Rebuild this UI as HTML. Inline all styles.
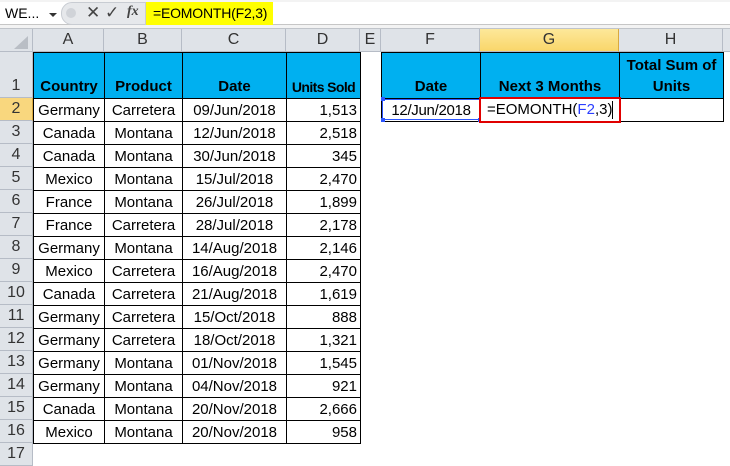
<!DOCTYPE html>
<html><head><style>
*{margin:0;padding:0;box-sizing:border-box}
body{width:730px;height:465px;overflow:hidden;background:#fff;font-family:"Liberation Sans",sans-serif;font-size:15px;color:#000;position:relative}
.a{position:absolute}
.hdr{position:absolute;background:#dfe3e8;border-right:1px solid #b6bcc6;border-bottom:1px solid #b6bcc6;color:#333;font-size:16px;text-align:center}
</style></head><body>
<!-- formula bar -->
<div class="a" style="left:0;top:0;width:730px;height:29px;background:#f3f3f3"></div>
<div class="a" style="left:0;top:2px;width:730px;height:23px;background:#fff;border-bottom:1px solid #c6c6c6"></div>
<div class="a" style="left:5px;top:5px;font-size:14px">WE...</div>
<div class="a" style="left:49px;top:13px;width:0;height:0;border-left:4px solid transparent;border-right:4px solid transparent;border-top:4px solid #333"></div>
<div class="a" style="left:61px;top:2px;width:85px;height:23px;background:#e6e8eb;border:1px solid #c8ccd2;border-radius:11px 0 0 11px"></div>
<div class="a" style="left:66px;top:8px;width:10px;height:10px;border-radius:5px;background:#d0d3d8"></div>
<div class="a" style="left:86px;top:3px;font-size:17px;color:#444">✕</div>
<div class="a" style="left:105px;top:3px;font-size:17px;color:#444">✓</div>
<div class="a" style="left:127px;top:4px;font-size:14px;font-style:italic;font-family:'Liberation Serif',serif;font-weight:bold;color:#444">fx</div>
<div class="a" style="left:146px;top:2px;width:127px;height:23px;background:#ffff00"></div>
<div class="a" style="left:153px;top:5px;font-size:14px;letter-spacing:-0.2px">=EOMONTH(F2,3)</div>
<div class="a" style="left:0;top:28px;width:730px;height:1px;background:#c0c4ca"></div>
<!-- column headers -->
<div class="hdr" style="left:0;top:29px;width:33px;height:23px"></div>
<div class="a" style="left:14px;top:36px;width:0;height:0;border-left:14px solid transparent;border-bottom:13px solid #b9bec5"></div>
<div class="hdr" style="left:33px;top:29px;width:71px;height:23px;line-height:22px">A</div>
<div class="hdr" style="left:104px;top:29px;width:78px;height:23px;line-height:22px">B</div>
<div class="hdr" style="left:182px;top:29px;width:104px;height:23px;line-height:22px">C</div>
<div class="hdr" style="left:286px;top:29px;width:74px;height:23px;line-height:22px">D</div>
<div class="hdr" style="left:360px;top:29px;width:21px;height:23px;line-height:22px">E</div>
<div class="hdr" style="left:381px;top:29px;width:99px;height:23px;line-height:22px">F</div>
<div class="hdr" style="left:480px;top:29px;width:139px;height:23px;line-height:22px;background:linear-gradient(#fde89a,#f9d66a);border-right-color:#d9a93f">G</div>
<div class="hdr" style="left:619px;top:29px;width:104px;height:23px;line-height:22px">H</div>
<div class="hdr" style="left:723px;top:29px;width:10px;height:23px"></div>
<!-- row headers -->
<div class="hdr" style="left:0;top:52px;width:33px;height:46px;line-height:68px">1</div>
<div class="hdr" style="left:0;top:98px;width:33px;height:23px;line-height:22px;background:#f9d77e;border-right-color:#d9a93f">2</div>
<div class="hdr" style="left:0;top:121px;width:33px;height:23px;line-height:22px">3</div>
<div class="hdr" style="left:0;top:144px;width:33px;height:23px;line-height:22px">4</div>
<div class="hdr" style="left:0;top:167px;width:33px;height:23px;line-height:22px">5</div>
<div class="hdr" style="left:0;top:190px;width:33px;height:23px;line-height:22px">6</div>
<div class="hdr" style="left:0;top:213px;width:33px;height:23px;line-height:22px">7</div>
<div class="hdr" style="left:0;top:236px;width:33px;height:23px;line-height:22px">8</div>
<div class="hdr" style="left:0;top:259px;width:33px;height:23px;line-height:22px">9</div>
<div class="hdr" style="left:0;top:282px;width:33px;height:23px;line-height:22px">10</div>
<div class="hdr" style="left:0;top:305px;width:33px;height:23px;line-height:22px">11</div>
<div class="hdr" style="left:0;top:328px;width:33px;height:23px;line-height:22px">12</div>
<div class="hdr" style="left:0;top:351px;width:33px;height:23px;line-height:22px">13</div>
<div class="hdr" style="left:0;top:374px;width:33px;height:23px;line-height:22px">14</div>
<div class="hdr" style="left:0;top:397px;width:33px;height:23px;line-height:22px">15</div>
<div class="hdr" style="left:0;top:420px;width:33px;height:23px;line-height:22px">16</div>
<div class="hdr" style="left:0;top:443px;width:33px;height:23px;line-height:22px">17</div>

<style>
.h td{border:1px solid #000;text-align:center;vertical-align:bottom;padding-bottom:1px;font-weight:bold;font-size:15px;overflow:hidden;white-space:nowrap;line-height:20px}
.t td{border:1px solid #000;height:23px;white-space:nowrap;overflow:hidden;padding:0 3px;line-height:21px;font-size:15px}
.t td.m{text-align:center}.t td.r{text-align:right}
</style>
<table class="a h" style="left:33px;top:52px;border-collapse:collapse;table-layout:fixed">
<colgroup><col style="width:71px"><col style="width:78px"><col style="width:104px"><col style="width:74px"></colgroup>
<tr style="height:46px;background:#00b0f0"><td>Country</td><td>Product</td><td>Date</td><td style="font-size:14px;letter-spacing:-0.6px">Units Sold</td></tr>
</table>
<table class="a t" style="left:33px;top:98px;border-collapse:collapse;table-layout:fixed">
<colgroup><col style="width:71px"><col style="width:78px"><col style="width:104px"><col style="width:74px"></colgroup>
<tr><td class="m">Germany</td><td class="m">Carretera</td><td class="m">09/Jun/2018</td><td class="r">1,513</td></tr>
<tr><td class="m">Canada</td><td class="m">Montana</td><td class="m">12/Jun/2018</td><td class="r">2,518</td></tr>
<tr><td class="m">Canada</td><td class="m">Montana</td><td class="m">30/Jun/2018</td><td class="r">345</td></tr>
<tr><td class="m">Mexico</td><td class="m">Montana</td><td class="m">15/Jul/2018</td><td class="r">2,470</td></tr>
<tr><td class="m">France</td><td class="m">Montana</td><td class="m">26/Jul/2018</td><td class="r">1,899</td></tr>
<tr><td class="m">France</td><td class="m">Carretera</td><td class="m">28/Jul/2018</td><td class="r">2,178</td></tr>
<tr><td class="m">Germany</td><td class="m">Montana</td><td class="m">14/Aug/2018</td><td class="r">2,146</td></tr>
<tr><td class="m">Mexico</td><td class="m">Carretera</td><td class="m">16/Aug/2018</td><td class="r">2,470</td></tr>
<tr><td class="m">Canada</td><td class="m">Carretera</td><td class="m">21/Aug/2018</td><td class="r">1,619</td></tr>
<tr><td class="m">Germany</td><td class="m">Carretera</td><td class="m">15/Oct/2018</td><td class="r">888</td></tr>
<tr><td class="m">Germany</td><td class="m">Carretera</td><td class="m">18/Oct/2018</td><td class="r">1,321</td></tr>
<tr><td class="m">Germany</td><td class="m">Montana</td><td class="m">01/Nov/2018</td><td class="r">1,545</td></tr>
<tr><td class="m">Germany</td><td class="m">Montana</td><td class="m">04/Nov/2018</td><td class="r">921</td></tr>
<tr><td class="m">Canada</td><td class="m">Montana</td><td class="m">20/Nov/2018</td><td class="r">2,666</td></tr>
<tr><td class="m">Mexico</td><td class="m">Montana</td><td class="m">20/Nov/2018</td><td class="r">958</td></tr>
</table>

<!-- right table -->
<table class="a h" style="left:381px;top:52px;border-collapse:collapse;table-layout:fixed">
<colgroup><col style="width:99px"><col style="width:139px"><col style="width:104px"></colgroup>
<tr style="height:46px;background:#00b0f0"><td>Date</td><td>Next 3 Months</td><td style="line-height:21px">Total Sum of<br>Units</td></tr>
</table>
<table class="a t" style="left:381px;top:98px;border-collapse:collapse;table-layout:fixed">
<colgroup><col style="width:99px"><col style="width:139px"><col style="width:104px"></colgroup>
<tr><td style="padding:0 1px;text-align:center;letter-spacing:-0.3px">12/Jun/2018</td><td></td><td></td></tr>
</table>
<!-- blue ref box on F2 -->
<div class="a" style="left:382px;top:99px;width:98px;height:21px;border:1px solid #2b55ff"></div>
<div class="a" style="left:381px;top:97px;width:4px;height:4px;background:#2b55ff"></div>
<div class="a" style="left:381px;top:118px;width:4px;height:4px;background:#2b55ff"></div>
<div class="a" style="left:478px;top:118px;width:4px;height:4px;background:#2b55ff"></div>
<!-- red edit box -->
<div class="a" style="left:479px;top:97px;width:142px;height:26px;border:2px solid #e00000;background:#fff"></div>
<div class="a" style="left:487px;top:99px;line-height:21px;font-size:15px">=EOMONTH(<span style="color:#2b3fff">F2</span>,3)</div>
<div class="a" style="left:612px;top:101px;width:1px;height:18px;background:#000"></div>
</body></html>
